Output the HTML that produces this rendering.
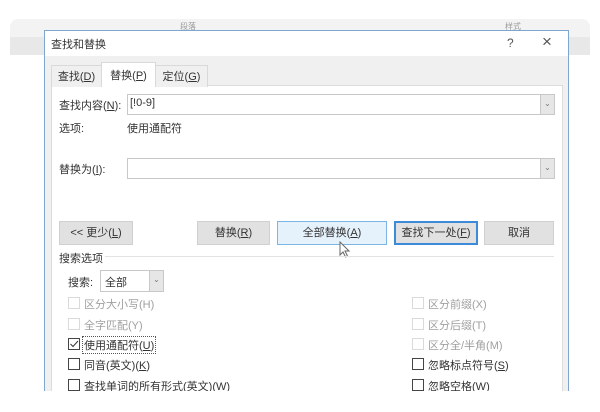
<!DOCTYPE html>
<html><head><meta charset="utf-8"><style>
*{box-sizing:border-box;margin:0;padding:0}
body{width:600px;height:412px;background:#fff;position:relative;overflow:hidden;font-family:"Liberation Sans","Noto Sans CJK SC",sans-serif;font-size:11px;color:#333}
.a{position:absolute}
.rib1{left:10px;top:19px;width:580px;height:19px;background:#f3f3f3;border-radius:8px 8px 0 0}
.rib2{left:10px;top:37px;width:580px;height:18px;background:#e8e8e8}
.dlg{left:44px;top:30px;width:525px;height:370px;background:#f0f0f0;border:1px solid #7fa6cc}
.title{left:0;top:0;width:523px;height:25px;background:#fff}
.panel{left:6px;top:54px;width:512px;height:320px;background:#fff;border:1px solid #dcdcdc}
.tab{top:33px;height:23px;border:1px solid #d9d9d9;border-bottom:none;background:#f0f0f0;text-align:center;line-height:22px;font-size:11px}
.inp{height:21px;background:#fff;border:1px solid #c8c8c8}
.dd{position:absolute;right:0;top:0;width:14px;height:19px;background:#e6e6e6;border-left:1px solid #c8c8c8;font-size:8px;color:#777;text-align:center;line-height:18px}
.btn{top:190px;height:24px;background:#e1e1e1;border:1px solid #d0d0d0;text-align:center;line-height:22px}
.cb{width:12px;height:12px;border:1px solid #444;background:#fff}
.cb.d{border-color:#dadada}
.g{color:#a0a0a0}
u{text-decoration:underline}
</style></head><body>
<div class="a rib1"></div><div class="a rib2"></div>
<div class="a" style="left:180px;top:21px;font-size:8px;color:#999">段落</div>
<div class="a" style="left:505px;top:21px;font-size:8px;color:#999">样式</div>
<div class="a dlg">
 <div class="a title"></div>
 <div class="a" style="left:6px;top:5px;font-size:11px">查找和替换</div>
 <div class="a" style="left:462px;top:5px;font-size:12px;color:#555">?</div>
 <div class="a" style="left:497px;top:1px;font-size:17px;color:#555;font-weight:300">×</div>
 <div class="a panel"></div>
 <div class="a tab" style="left:6px;width:51px;top:34px;height:22px">查找(<u>D</u>)</div>
 <div class="a tab" style="left:56px;width:55px;top:31px;height:25px;background:#fff;line-height:26px">替换(<u>P</u>)</div>
 <div class="a tab" style="left:110px;width:53px;top:34px;height:22px">定位(<u>G</u>)</div>
 <div class="a" style="left:14px;top:66px">查找内容(<u>N</u>):</div>
 <div class="a inp" style="left:82px;top:63px;width:428px"><span style="position:absolute;left:2px;top:2px">[!0-9]</span><div class="dd">⌄</div></div>
 <div class="a" style="left:14px;top:89px">选项:</div>
 <div class="a" style="left:82px;top:89px">使用通配符</div>
 <div class="a" style="left:14px;top:130px">替换为(<u>I</u>):</div>
 <div class="a inp" style="left:82px;top:127px;width:428px"><div class="dd">⌄</div></div>
 <div class="a btn" style="left:14px;width:74px">&lt;&lt; 更少(<u>L</u>)</div>
 <div class="a btn" style="left:152px;width:73px">替换(<u>R</u>)</div>
 <div class="a btn" style="left:232px;width:110px;background:#e5f1fb;border-color:#7ab5e3">全部替换(<u>A</u>)</div>
 <div class="a btn" style="left:349px;width:84px;border:2px solid #3c8ad8;line-height:20px">查找下一处(<u>F</u>)</div>
 <div class="a btn" style="left:439px;width:70px">取消</div>
 <svg class="a" style="left:294px;top:210px" width="12" height="18" viewBox="0 0 12 18"><path d="M1 1V14L4 11L6.5 16L8.5 15L6 10H10Z" fill="#fff" stroke="#666"/></svg>
 <div class="a" style="left:14px;top:219px">搜索选项</div>
 <div class="a" style="left:60px;top:225px;width:449px;height:1px;background:#e3e3e3"></div>
 <div class="a" style="left:23px;top:243px">搜索:</div>
 <div class="a inp" style="left:55px;top:239px;width:64px;height:22px;border-color:#c8c8c8"><span style="position:absolute;left:4px;top:3px">全部</span><div class="dd" style="height:20px">⌄</div></div>
 <div class="a cb d" style="left:23px;top:266px"></div><div class="a g" style="left:39px;top:265px">区分大小写(H)</div>
 <div class="a cb d" style="left:23px;top:287px"></div><div class="a g" style="left:39px;top:286px">全字匹配(Y)</div>
 <div class="a cb" style="left:23px;top:307px"><svg width="10" height="10" style="position:absolute;left:0;top:0"><path d="M1.5 5L4 7.5L9 2" fill="none" stroke="#333"/></svg></div>
 <div class="a" style="left:37px;top:305px;border:1px dotted #555;padding:0 1px">使用通配符(<u>U</u>)</div>
 <div class="a cb" style="left:23px;top:327px"></div><div class="a" style="left:39px;top:326px">同音(英文)(<u>K</u>)</div>
 <div class="a cb" style="left:23px;top:348px"></div><div class="a" style="left:39px;top:347px">查找单词的所有形式(英文)(<u>W</u>)</div>
 <div class="a cb d" style="left:367px;top:266px"></div><div class="a g" style="left:383px;top:265px">区分前缀(X)</div>
 <div class="a cb d" style="left:367px;top:287px"></div><div class="a g" style="left:383px;top:286px">区分后缀(T)</div>
 <div class="a cb d" style="left:367px;top:307px"></div><div class="a g" style="left:383px;top:306px">区分全/半角(M)</div>
 <div class="a cb" style="left:367px;top:327px"></div><div class="a" style="left:383px;top:326px">忽略标点符号(<u>S</u>)</div>
 <div class="a cb" style="left:367px;top:348px"></div><div class="a" style="left:383px;top:347px">忽略空格(<u>W</u>)</div>
</div>
<div class="a" style="left:0;top:391px;width:600px;height:21px;background:#fff"></div>
</body></html>
